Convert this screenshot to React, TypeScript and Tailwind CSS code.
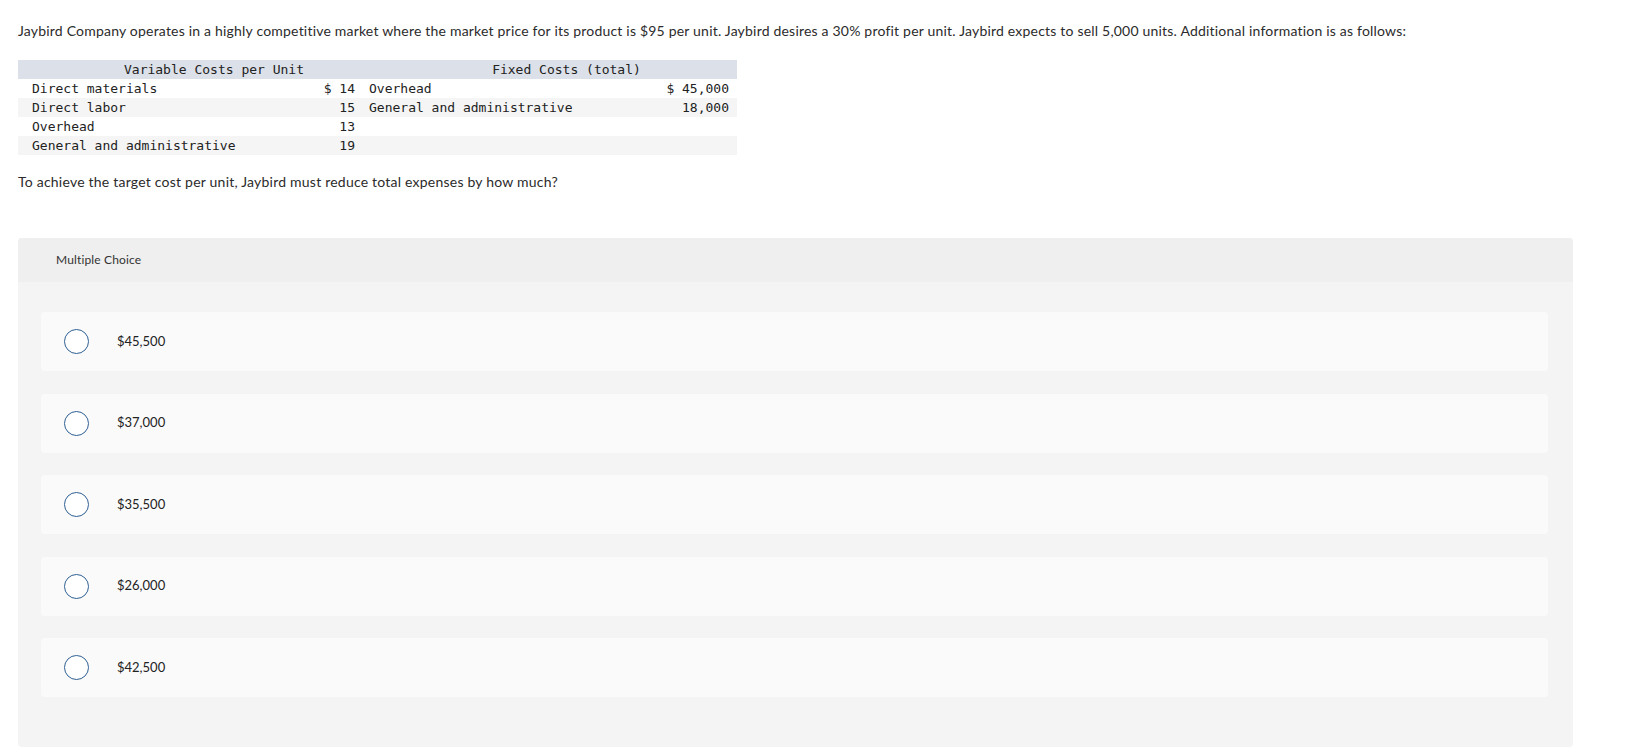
import React from 'react';

const variableCosts = [
  { label: 'Direct materials', amount: '$ 14', fixedLabel: 'Overhead', fixedAmount: '$ 45,000' },
  { label: 'Direct labor', amount: '15', fixedLabel: 'General and administrative', fixedAmount: '18,000' },
  { label: 'Overhead', amount: '13', fixedLabel: '', fixedAmount: '' },
  { label: 'General and administrative', amount: '19', fixedLabel: '', fixedAmount: '' },
];

const choices = ['$45,500', '$37,000', '$35,500', '$26,000', '$42,500'];

const CostTable: React.FC = () => (
  <div className="ml-[18px] mt-[19px] w-[719px] font-['DejaVu_Sans_Mono',monospace] text-[13px] leading-[19px] text-[#222]">
    {/* Header */}
    <div className="flex h-[19px] bg-[#dce0e8]">
      <div className="w-[392px] text-center">Variable Costs per Unit</div>
      <div className="flex-1 text-center pr-[14px]">Fixed Costs (total)</div>
    </div>
    {variableCosts.map((row, i) => (
      <div
        key={row.label}
        className={`flex h-[19px] ${i % 2 === 1 ? 'bg-[#f5f5f5]' : 'bg-white'}`}
      >
        <div className="w-[301px] pl-[14px] whitespace-pre">{row.label}</div>
        <div className="w-[36px] text-right whitespace-pre">{row.amount}</div>
        <div className="w-[14px]" />
        <div className="flex-1 whitespace-pre">{row.fixedLabel}</div>
        <div className="w-[120px] text-right pr-[8px] whitespace-pre">{row.fixedAmount}</div>
      </div>
    ))}
  </div>
);

const Choice: React.FC<{ label: string }> = ({ label }) => (
  <div className="flex items-center h-[59px] rounded-[4px] bg-[#fafafa]">
    <span className="ml-[23px] w-[25px] h-[25px] rounded-full border-[1.5px] border-[#2e5f93] bg-white" />
    <span className="ml-[28px] text-[13px] text-[#222]">{label}</span>
  </div>
);

export default function App() {
  return (
    <div className="h-[748px] overflow-hidden bg-white font-['Lato','Noto_Sans',sans-serif] text-[#2b2b2b]">
      <p className="pt-[21px] pl-[18px] text-[14px] leading-[20px] tracking-[0.2px]">
        Jaybird Company operates in a highly competitive market where the market price for its product is $95 per unit.
        Jaybird desires a 30% profit per unit. Jaybird expects to sell 5,000 units. Additional information is as follows:
      </p>

      <CostTable />

      <p className="mt-[17px] pl-[18px] text-[14px] leading-[20px] tracking-[0.22px]">
        To achieve the target cost per unit, Jaybird must reduce total expenses by how much?
      </p>

      {/* Multiple choice block */}
      <div className="mt-[46px] ml-[18px] w-[1555px] rounded-[4px] bg-[#f4f4f4] pb-[50px]">
        <div className="h-[44px] flex items-center pl-[38px] rounded-t-[4px] bg-[#efefef] text-[12px] tracking-[0.15px] text-[#333]">
          Multiple Choice
        </div>
        <div className="mt-[30px] mx-[23px] mr-[25px] flex flex-col gap-[22.5px]">
          {choices.map((c) => (
            <Choice key={c} label={c} />
          ))}
        </div>
      </div>
    </div>
  );
}
